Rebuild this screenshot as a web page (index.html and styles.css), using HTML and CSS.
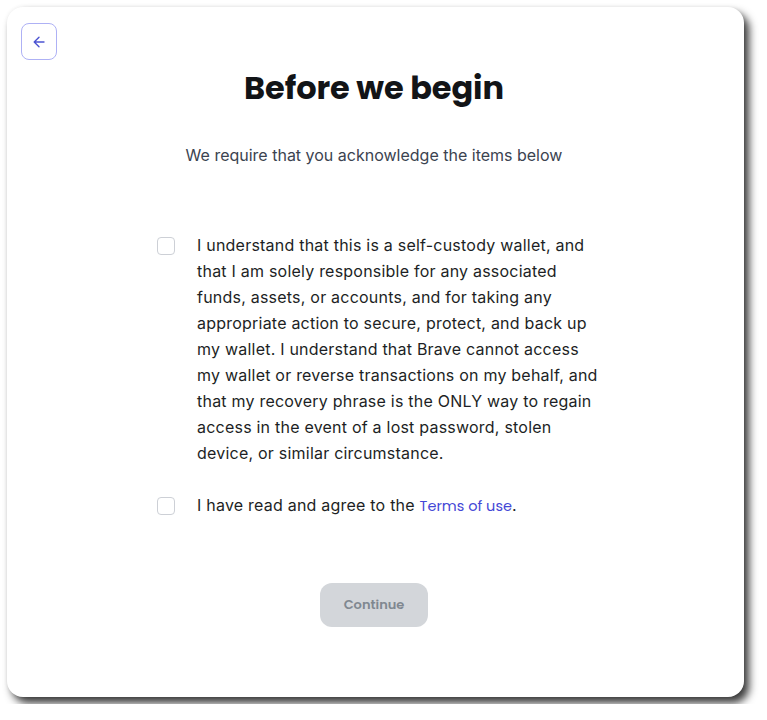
FILE: index.html
```html
<!DOCTYPE html>
<html>
<head>
<meta charset="utf-8">
<link rel="stylesheet" href="styles.css">
</head>
<body>
<div class="card">
  <div class="topbar">
    <button class="back" aria-label="Back">
      <svg width="14" height="14" viewBox="0 0 14 14" fill="none" stroke="#4c54d2" stroke-width="1.4" stroke-linecap="round" stroke-linejoin="round"><path d="M12 7H2.5M7 2.2 2.2 7 7 11.8"/></svg>
    </button>
  </div>
  <h1 class="title">Before we begin</h1>
  <p class="subtitle">We require that you acknowledge the items below</p>
  <div class="items">
    <label class="item">
      <span class="box"></span>
      <span class="text">I understand that this is a self-custody wallet, and that I am solely responsible for any associated funds, assets, or accounts, and for taking any appropriate action to secure, protect, and back up my wallet. I understand that Brave cannot access my wallet or reverse transactions on my behalf, and that my recovery phrase is the ONLY way to regain access in the event of a lost password, stolen device, or similar circumstance.</span>
    </label>
    <label class="item">
      <span class="box"></span>
      <span class="text">I have read and agree to the <a class="link" href="#">Terms of use</a>.</span>
    </label>
  </div>
  <div class="actions">
    <button class="continue" disabled>Continue</button>
  </div>
</div>
</body>
</html>
```
FILE: styles.css
```css
html, body {
  margin: 0;
  padding: 0;
  background: #ffffff;
}
body {
  padding: 7px;
  font-family: Inter, "Noto Sans", sans-serif;
}
.card {
  box-sizing: border-box;
  width: 737px;
  height: 690px;
  background: #ffffff;
  border-radius: 16px;
  box-shadow: 5px 6px 8px rgba(0, 0, 0, 0.78), 0 0 4px rgba(0, 0, 0, 0.05);
  padding: 16px 17px 0 14px;
  display: flex;
  flex-direction: column;
  align-items: center;
}
.topbar {
  align-self: stretch;
  display: flex;
}
.back {
  box-sizing: border-box;
  width: 36px;
  height: 37px;
  border: 1px solid #aeb1f5;
  border-radius: 8px;
  background: #fff;
  display: flex;
  align-items: center;
  justify-content: center;
  padding: 0;
}
.title {
  margin: 8px 0 0;
  font-family: Poppins, "Open Sans", Inter, sans-serif;
  font-weight: 700;
  font-size: 32px;
  line-height: 40px;
  color: #121417;
  letter-spacing: -0.1px;
}
.subtitle {
  margin: 35px 0 0;
  font-size: 16px;
  line-height: 24px;
  color: #3b4350;
}
.items {
  align-self: flex-start;
  margin: 65px 0 0 136px;
  width: 444px;
  display: flex;
  flex-direction: column;
  gap: 26px;
}
.item {
  display: flex;
  gap: 22px;
  align-items: flex-start;
}
.box {
  flex: none;
  box-sizing: border-box;
  width: 18px;
  height: 18px;
  margin-top: 5px;
  border: 1px solid #cdd0d6;
  border-radius: 4px;
  background: #fff;
}
.text {
  font-size: 16px;
  line-height: 26px;
  color: #1d1f25;
  letter-spacing: 0.22px;
}
.link {
  color: #4447d6;
  text-decoration: none;
  font-family: Poppins, "Open Sans", sans-serif;
  font-size: 14.5px;
  letter-spacing: 0;
}
.actions {
  margin-top: 64px;
  display: flex;
  justify-content: center;
}
.continue {
  width: 108px;
  height: 44px;
  border: none;
  border-radius: 12px;
  background: #d3d6da;
  color: #808890;
  font-family: Poppins, "Open Sans", sans-serif;
  font-weight: 600;
  font-size: 13px;
}
```
